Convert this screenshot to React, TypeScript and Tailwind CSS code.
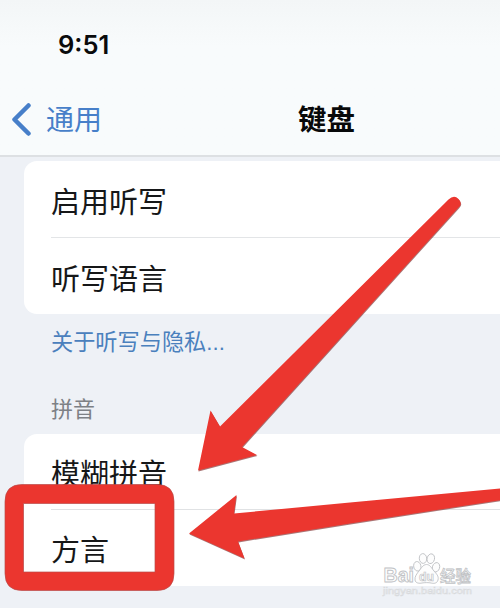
import type { ReactNode } from "react";

function Row({ children, className }: { children: ReactNode; className: string }) {
  return (
    <div className={`flex items-center text-[29px] leading-none text-[#161718] ${className}`}>
      <span className="whitespace-nowrap">{children}</span>
    </div>
  );
}

function Watermark() {
  return (
    <svg
      className="absolute left-[380px] top-[550px]"
      width="100"
      height="54"
      viewBox="0 0 100 54"
      fill="#fdfdfd"
      stroke="#c0c2c5"
      strokeWidth="0.9"
    >
      <text x="3.500" y="32" fontSize="20" fontWeight="700" textLength="30.500" lengthAdjust="spacingAndGlyphs" fontFamily="'Liberation Sans', sans-serif">
        Bai
      </text>
      <ellipse cx="37.300" cy="16.300" rx="3.600" ry="4.800" transform="rotate(-12 37.300 16.300)" />
      <ellipse cx="43" cy="8.500" rx="3.700" ry="4.900" transform="rotate(-5 43 8.500)" />
      <ellipse cx="50.800" cy="8.700" rx="3.700" ry="4.900" transform="rotate(14 50.800 8.700)" />
      <ellipse cx="56" cy="17.300" rx="3.600" ry="4.800" transform="rotate(18 56 17.300)" />
      <path d="M46.500 14.500c3.500 0 5 3.500 7.500 6.500s5 5 4 9-5 3.500-7 3-6.500-.5-9 0-6.500.5-7-3 2-6.500 4-9 4-6.500 7.500-6.500Z" />
      <text x="39" y="31" fontSize="13" fontWeight="700" strokeWidth="0.7" textLength="15" lengthAdjust="spacingAndGlyphs" fontFamily="'Liberation Sans', sans-serif">
        du
      </text>
      <text x="60" y="31.500" fontSize="15.500" fontWeight="500" textLength="31" strokeWidth="0.8" fontFamily="'Noto Sans CJK SC', sans-serif">
        经验
      </text>
      <text x="3" y="43.500" fontSize="9.500" textLength="89" lengthAdjust="spacingAndGlyphs" stroke="#d8dadd" strokeWidth="0.6" fontFamily="'Liberation Sans', sans-serif">
        jingyan.baidu.com
      </text>
    </svg>
  );
}

function Annotations() {
  return (
    <svg className="absolute left-0 top-0" width="500" height="608" viewBox="0 0 500 608">
      <g fill="#7d2d2d" opacity="0.65" transform="translate(0.500 0.900)">
        <path d="M198 470.500 210.500 410.500 220 426.500 448.500 199.500Q454 194.500 458.500 199T458.500 207.500L242 447 257 455Z" />
        <path d="M189 533.500 236.500 495 234 513.500 350 502.500 501 488.500V500L350 523.500 238 541.500 244.500 558.500Z" />
      </g>
      <g fill="#eb362f">
        <path d="M198 470.500 210.500 410.500 220 426.500 448.500 199.500Q454 194.500 458.500 199T458.500 207.500L242 447 257 455Z" />
        <path d="M189 533.500 236.500 495 234 513.500 350 502.500 501 488.500V500L350 523.500 238 541.500 244.500 558.500Z" />
      </g>
      <path
        fillRule="evenodd"
        fill="#eb362f"
        stroke="#b94a49"
        strokeWidth="0.7"
        d="M22 484.500H157Q174 484.500 174 501.500V573.500Q174 590.500 157 590.500H22Q5 590.500 5 573.500V501.500Q5 484.500 22 484.500ZM23.500 503.500V572H155V503.500Z"
      />
    </svg>
  );
}

export default function App() {
  return (
    <div className="relative flex h-[608px] w-[500px] flex-col overflow-hidden bg-[#eef1f6] font-['Liberation_Sans','Noto_Sans_CJK_SC',sans-serif]">
      <header className="flex h-[157px] shrink-0 flex-col border-b-2 border-[#dde0e3] bg-linear-to-b from-[#f3f6f7] via-[#f8fbfc] via-30% to-[#f8fbfc]">
        <div className="flex h-[82px] items-center pl-[58px] pt-[7px]">
          <span className="font-['Inter',sans-serif] text-[25.500px] font-semibold leading-none text-[#0a0b0c]">9:51</span>
        </div>
        <div className="grid h-[73px] grid-cols-[298px_1fr] items-center">
          <div className="flex items-center gap-[14px] pl-[11px] text-[#477fc9]">
            <svg width="21" height="34" viewBox="0 0 21 34" fill="none" stroke="currentColor" strokeWidth="4.500" strokeLinecap="round" strokeLinejoin="round">
              <path d="M17.500 3.500 3.500 17.500 17.500 31.500" />
            </svg>
            <span className="pt-[4px] text-[28px] leading-none">通用</span>
          </div>
          <h1 className="pt-[4px] text-[28.500px] font-bold leading-none text-[#08090a]">键盘</h1>
        </div>
      </header>

      <main className="flex flex-col pl-6 pt-1">
        <section className="flex h-[153px] flex-col rounded-l-[13px] bg-white pl-[27px]">
          <Row className="h-[77px] border-b border-[#e3e5e7] pt-[8px]">启用听写</Row>
          <Row className="h-[76px] pt-[8px]">听写语言</Row>
        </section>
        <a className="mt-[16px] h-[26px] whitespace-nowrap pl-[27px] text-[22.200px] leading-[26px] text-[#4a80bd]">关于听写与隐私...</a>
        <h2 className="mt-[41px] h-[26px] pl-[27px] text-[22px] leading-[26px] text-[#7d8085]">拼音</h2>
        <section className="mt-[11px] flex h-[152px] flex-col rounded-tl-[13px] bg-white pl-[27px]">
          <Row className="h-[76px] border-b border-[#e0e2e4] pt-[7px]">模糊拼音</Row>
          <Row className="h-[76px] pt-[6px]">方言</Row>
        </section>
      </main>

      <Annotations />
      <Watermark />
    </div>
  );
}
